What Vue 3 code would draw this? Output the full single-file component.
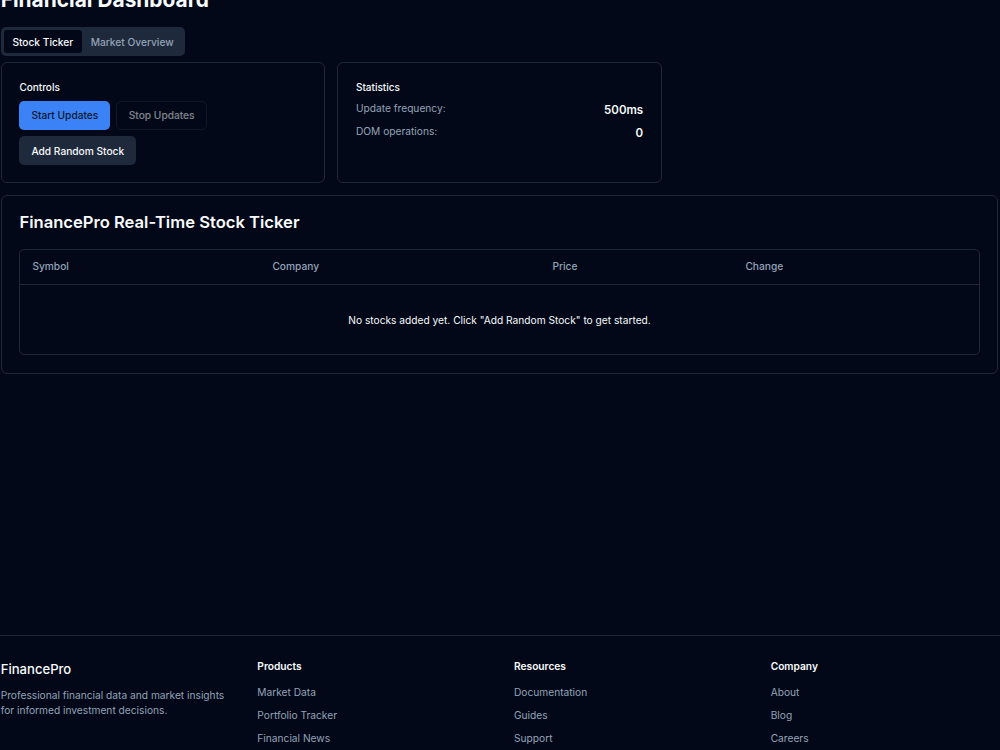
<script setup>
const columns = ['Symbol', 'Company', 'Price', 'Change']

const footerLinks = [
  { title: 'Products', links: ['Market Data', 'Portfolio Tracker', 'Financial News'] },
  { title: 'Resources', links: ['Documentation', 'Guides', 'Support'] },
  { title: 'Company', links: ['About', 'Blog', 'Careers'] }
]
</script>

<template>
  <div class="page">
    <main class="main">
      <h1 class="title">Financial Dashboard</h1>

      <div class="tabs">
        <button class="tab active">Stock Ticker</button>
        <button class="tab">Market Overview</button>
      </div>

      <div class="panels">
        <section class="card panel">
          <h3>Controls</h3>
          <div class="buttons">
            <button class="btn primary">Start Updates</button>
            <button class="btn outline" disabled>Stop Updates</button>
            <button class="btn secondary">Add Random Stock</button>
          </div>
        </section>

        <section class="card panel">
          <h3>Statistics</h3>
          <div class="stat">
            <span>Update frequency:</span>
            <strong>500ms</strong>
          </div>
          <div class="stat">
            <span>DOM operations:</span>
            <strong>0</strong>
          </div>
        </section>
      </div>

      <section class="card ticker">
        <h2>FinancePro Real-Time Stock Ticker</h2>
        <div class="table-wrap">
          <table>
            <colgroup>
              <col style="width: 240px" />
              <col style="width: 280px" />
              <col style="width: 193px" />
              <col />
            </colgroup>
            <thead>
              <tr>
                <th v-for="col in columns" :key="col">{{ col }}</th>
              </tr>
            </thead>
            <tbody>
              <tr>
                <td colspan="4">No stocks added yet. Click "Add Random Stock" to get started.</td>
              </tr>
            </tbody>
          </table>
        </div>
      </section>
    </main>

    <footer class="footer">
      <div class="footer-grid">
        <div>
          <div class="brand">FinancePro</div>
          <p class="about">Professional financial data and market insights for informed investment decisions.</p>
        </div>
        <div v-for="group in footerLinks" :key="group.title">
          <h4>{{ group.title }}</h4>
          <ul>
            <li v-for="link in group.links" :key="link">{{ link }}</li>
          </ul>
        </div>
      </div>
    </footer>
  </div>
</template>

<style>
html,
body {
  margin: 0;
  height: 750px;
  overflow: hidden;
  background: #020817;
}
</style>

<style scoped>
.page {
  margin-top: -16px;
  color: #f8fafc;
  font-family: Inter, "Liberation Sans", sans-serif;
}

.main {
  min-height: 651px;
  box-sizing: border-box;
  padding: 0 1.6px 0 0.7px;
}

.title {
  margin: 0 0 11px;
  font-size: 20.9px;
  line-height: 32px;
  font-weight: 700;
}

.tabs {
  display: inline-flex;
  vertical-align: top;
  padding: 3px;
  height: 29px;
  box-sizing: border-box;
  background: #1e293b;
  border-radius: 5px;
}

.tab {
  border: 0;
  padding: 1px 8.7px 0;
  background: transparent;
  color: #94a3b8;
  border-radius: 3px;
  font: 500 10.2px Inter, sans-serif;
}

.tab.active {
  background: #020817;
  color: #f8fafc;
}

.panels {
  display: grid;
  grid-template-columns: repeat(3, 1fr);
  gap: 12px;
  margin-top: 6px;
}

.card {
  border: 1px solid #1e293b;
  border-radius: 6px;
  box-sizing: border-box;
}

.panel {
  height: 120.6px;
  padding: 17.4px 17.7px;
}

h3 {
  margin: 0 0 6.6px;
  font-size: 10px;
  line-height: 14px;
  font-weight: 500;
}

.buttons {
  display: flex;
  flex-wrap: wrap;
  gap: 6px;
}

.btn {
  height: 29px;
  padding: 0 12px;
  border-radius: 5px;
  border: 0;
  font: 500 10.2px Inter, sans-serif;
}

.primary {
  background: #3b82f6;
  color: #0f172a;
}

.outline {
  padding: 0 11.4px;
  background: #020817;
  border: 1px solid #1e293b;
  color: #f8fafc;
}

.outline:disabled {
  opacity: 0.5;
}

.secondary {
  padding-top: 1px;
  background: #1e293b;
  color: #f8fafc;
}

.stat {
  display: flex;
  justify-content: space-between;
  margin-bottom: 7px;
  height: 16px;
  font-size: 10.2px;
  line-height: 14px;
  color: #94a3b8;
}

.stat strong {
  margin-top: -1px;
  font-size: 11.5px;
  line-height: 20px;
  font-weight: 600;
  color: #f8fafc;
}

.ticker {
  margin-top: 12px;
  height: 179px;
  padding: 17px 17.7px;
}

h2 {
  margin: 0 0 18px;
  font-size: 16.6px;
  line-height: 18px;
  padding: 0;
  font-weight: 600;
}

.table-wrap {
  border: 1px solid #1e293b;
  border-radius: 5px;
  overflow: hidden;
}

table {
  width: 100%;
  border-collapse: collapse;
  table-layout: fixed;
  font-size: 10.2px;
}

th {
  height: 35px;
  padding: 0 12px 1px;
  box-sizing: border-box;
  text-align: left;
  font-weight: 500;
  color: #94a3b8;
  border-bottom: 1px solid #1e293b;
}

td {
  height: 69px;
  padding: 0;
  text-align: center;
}

.footer {
  border-top: 1px solid #1e293b;
  padding: 23px 0.7px 0;
}

.footer-grid {
  display: grid;
  grid-template-columns: repeat(4, 224.67px);
  gap: 32px;
}

.brand {
  font-size: 13.1px;
  line-height: 20px;
  font-weight: 500;
}

.about {
  margin: 9px 0 0;
  font-size: 10.2px;
  line-height: 15px;
  color: #94a3b8;
}

h4 {
  margin: 0 0 12px;
  font-size: 10.2px;
  line-height: 14px;
  font-weight: 600;
}

ul {
  margin: 0;
  padding: 0;
  list-style: none;
}

li {
  font-size: 10.2px;
  line-height: 15px;
  margin-bottom: 8px;
  color: #94a3b8;
}
</style>
